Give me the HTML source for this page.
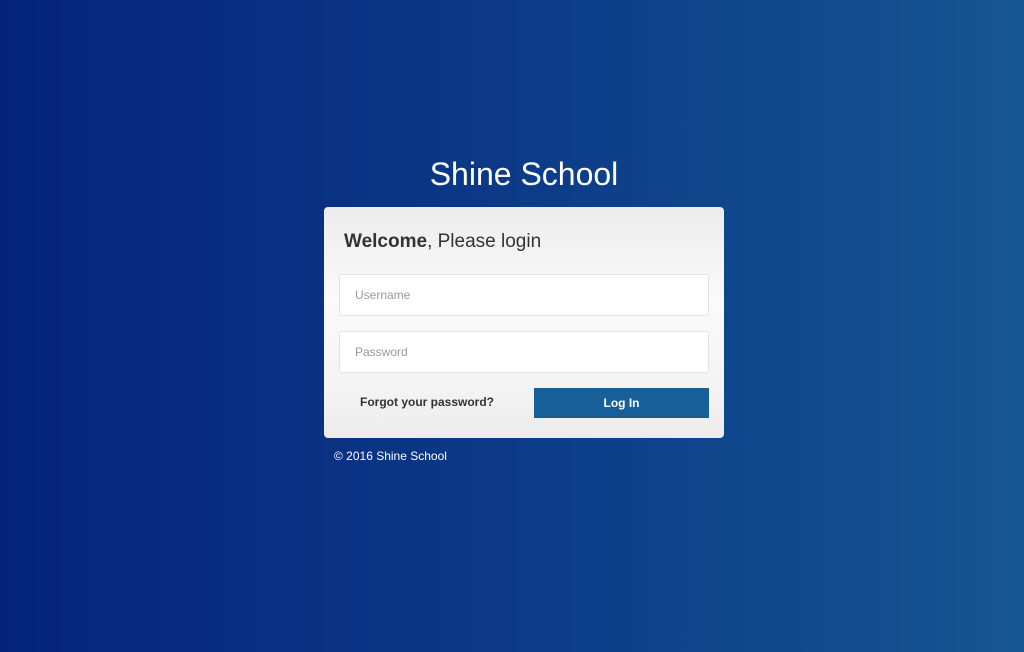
<!DOCTYPE html>
<html><head><meta charset="utf-8"><style>
html,body{margin:0;padding:0;width:1024px;height:652px;overflow:hidden}
body{background:linear-gradient(to right,#04247b 0%,#0a3585 40%,#165593 100%);font-family:"Liberation Sans",Arial,sans-serif;position:relative}
h1{position:absolute;left:324px;width:400px;top:154px;margin:0;text-align:center;color:#fff;font-weight:normal;font-size:32px;line-height:40px}
.card{position:absolute;left:324px;top:207px;width:400px;height:231px;border-radius:4px;background:linear-gradient(to bottom,#ececec 0%,#fafafa 40%,#f3f3f3 80%,#ececec 100%)}
.hd{position:absolute;left:20px;top:24px;font-size:19px;color:#333}
.in{position:absolute;left:15px;background:#fff;border:1px solid #e3e3e3;border-radius:3px;box-sizing:border-box;width:370px;height:42px;font-size:12px;color:#999;padding-left:15px;line-height:40px}
.fg{position:absolute;left:36px;top:188px;font-size:12px;font-weight:bold;color:#333}
.btn{position:absolute;left:210px;top:181px;width:175px;height:30px;background:#165f99;color:#fff;font-size:12px;font-weight:bold;text-align:center;line-height:30px}
.ft{position:absolute;left:334px;top:449px;color:#fff;font-size:12px}
</style></head><body>
<h1>Shine School</h1>
<div class="card">
<div class="hd"><b>Welcome</b>, Please login</div>
<div class="in" style="top:67px">Username</div>
<div class="in" style="top:124px">Password</div>
<div class="fg">Forgot your password?</div>
<div class="btn">Log In</div>
</div>
<div class="ft">© 2016 Shine School</div>
</body></html>
